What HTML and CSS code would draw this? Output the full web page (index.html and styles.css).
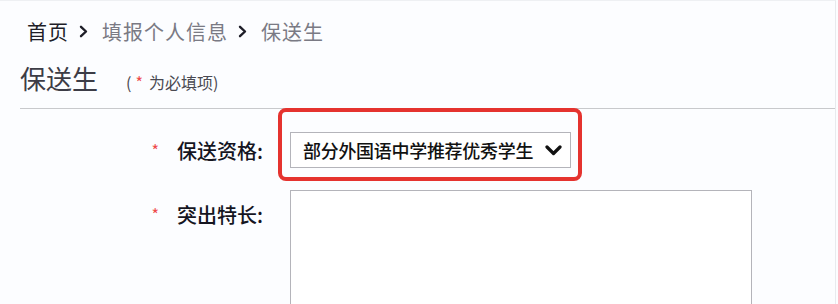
FILE: index.html
```html
<!DOCTYPE html>
<html lang="zh">
<head>
<meta charset="utf-8">
<link rel="stylesheet" href="styles.css">
</head>
<body>
<div class="page">
  <div class="crumbs">
    <span class="crumb-home">首页</span>
    <svg class="sep" width="9" height="13" viewBox="0 0 9 13"><path d="M2 1.8 L7 6.5 L2 11.2" fill="none" stroke="#1e1e28" stroke-width="2.4" stroke-linecap="round" stroke-linejoin="round"/></svg>
    <span class="crumb">填报个人信息</span>
    <svg class="sep" width="9" height="13" viewBox="0 0 9 13"><path d="M2 1.8 L7 6.5 L2 11.2" fill="none" stroke="#1e1e28" stroke-width="2.4" stroke-linecap="round" stroke-linejoin="round"/></svg>
    <span class="crumb">保送生</span>
  </div>
  <div class="title-row">
    <h1 class="title">保送生</h1>
    <span class="note">(<span class="star">*</span>为必填项)</span>
  </div>
  <div class="rule"></div>
  <div class="form">
    <div class="label"><span class="star">*</span>保送资格:</div>
    <div class="control">
      <div class="select">
        <span class="select-text">部分外国语中学推荐优秀学生</span>
        <svg class="chev" width="17" height="11" viewBox="0 0 17 11"><path d="M2 2 L8.5 8.5 L15 2" fill="none" stroke="#111" stroke-width="3.2" stroke-linecap="round" stroke-linejoin="round"/></svg>
      </div>
      <div class="highlight"></div>
    </div>
    <div class="label label-top"><span class="star">*</span>突出特长:</div>
    <div class="control">
      <div class="textarea"></div>
    </div>
  </div>
</div>
</body>
</html>
```
FILE: styles.css
```css
html, body {
  margin: 0;
  padding: 0;
  background: #fcfdff;
  overflow: hidden;
}
body {
  font-family: "Noto Sans CJK SC", "Noto Sans", sans-serif;
  width: 838px;
  height: 304px;
}
.page {
  height: 304px;
  border-top: 1px solid #eef0f3;
  border-right: 1px solid #e8eaee;
  box-sizing: border-box;
  margin-right: 2px;
  overflow: hidden;
}
.crumbs {
  display: flex;
  align-items: center;
  padding-left: 27px;
  margin-top: 14px;
  height: 32px;
  font-size: 20px;
  letter-spacing: 1px;
  color: #7a7a84;
}
.crumb-home {
  color: #1e1e28;
}
.sep {
  display: block;
  margin: 1px 14px 0 10px;
}
.title-row {
  display: flex;
  align-items: baseline;
  padding-left: 20px;
  margin-top: 11px;
  height: 40px;
}
.title {
  margin: 0;
  font-size: 26px;
  font-weight: 400;
  color: #3c3c46;
  line-height: 40px;
}
.note {
  margin-left: 28px;
  font-size: 16px;
  color: #4a4a52;
}
.star {
  color: #ee4a4a;
}
.note .star {
  margin: 0 6px 0 4px;
}
.rule {
  margin-left: 20px;
  margin-top: 10px;
  border-top: 1px solid #c8c9cc;
}
.form {
  display: grid;
  grid-template-columns: 263px 462px;
  column-gap: 27px;
  row-gap: 21px;
  margin-top: 23px;
}
.label {
  text-align: right;
  font-size: 20px;
  font-weight: 500;
  color: #15151f;
  line-height: 36px;
}
.label .star {
  font-size: 16px;
  font-weight: 400;
  vertical-align: 2px;
  margin-right: 18px;
}
.label-top {
  line-height: 1;
  padding-top: 15px;
}
.control {
  position: relative;
}
.select {
  width: 281px;
  height: 36px;
  box-sizing: border-box;
  border: 1px solid #b4b4ba;
  background: #fff;
  display: flex;
  align-items: center;
  justify-content: space-between;
  padding: 0 8px 0 12px;
}
.select-text {
  font-size: 18px;
  font-weight: 500;
  color: #111;
  letter-spacing: -0.3px;
}
.chev {
  display: block;
}
.highlight {
  position: absolute;
  left: -12px;
  top: -24px;
  width: 304px;
  height: 73px;
  box-sizing: border-box;
  border: 4px solid #e5332f;
  border-radius: 8px;
}
.textarea {
  width: 462px;
  height: 116px;
  box-sizing: border-box;
  border: 1px solid #b4b4ba;
  border-bottom: none;
  background: #fff;
}
```
